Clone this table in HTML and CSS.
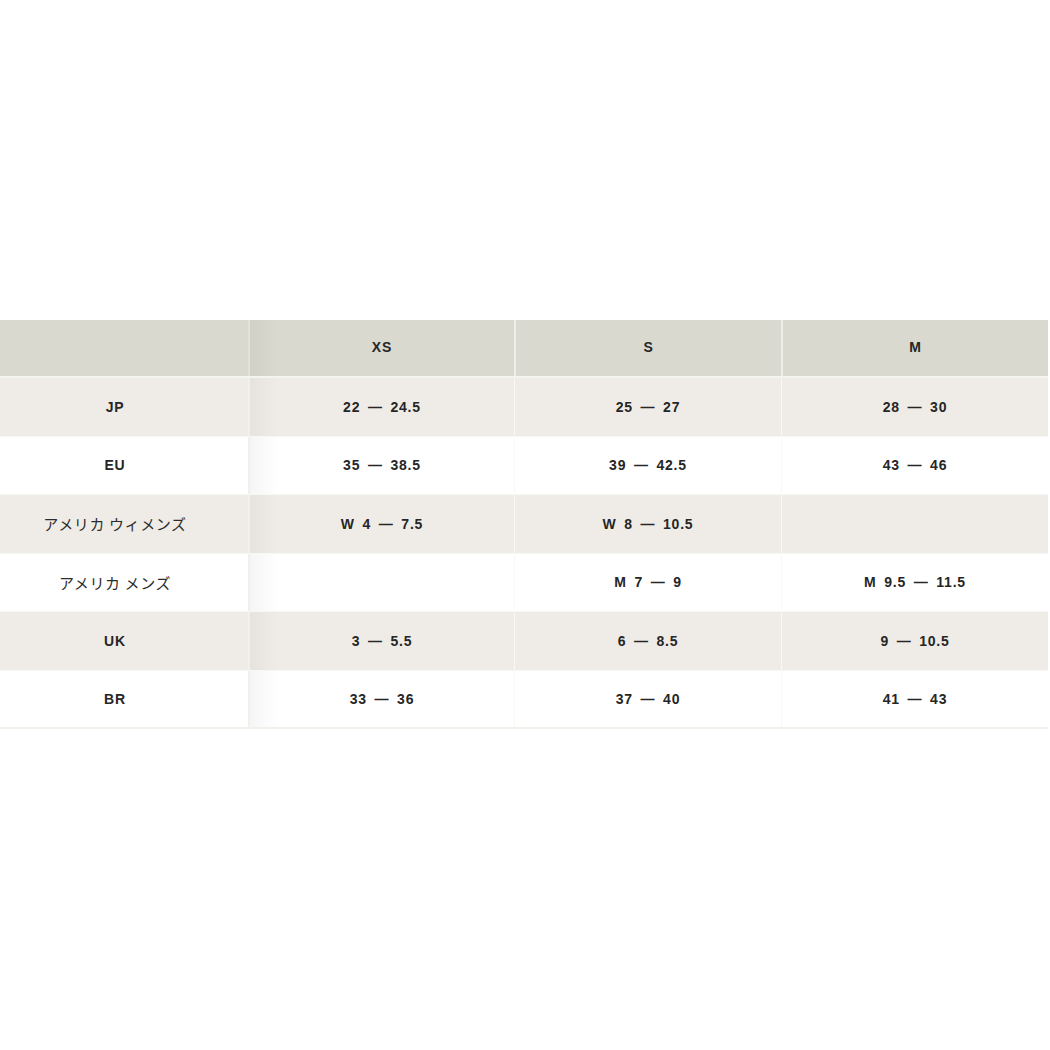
FILE: index.html
```html
<!DOCTYPE html>
<html lang="ja">
<head>
<meta charset="utf-8">
<link rel="stylesheet" href="styles.css">
</head>
<body>
<div class="page">
  <div class="size-table">
    <div class="row head">
      <div class="cell label"></div>
      <div class="cell c2">XS</div>
      <div class="cell">S</div>
      <div class="cell">M</div>
    </div>
    <div class="row tint">
      <div class="cell label">JP</div>
      <div class="cell c2">22 — 24.5</div>
      <div class="cell">25 — 27</div>
      <div class="cell">28 — 30</div>
    </div>
    <div class="row">
      <div class="cell label">EU</div>
      <div class="cell c2">35 — 38.5</div>
      <div class="cell">39 — 42.5</div>
      <div class="cell">43 — 46</div>
    </div>
    <div class="row tint">
      <div class="cell label jp">アメリカ ウィメンズ</div>
      <div class="cell c2">W 4 — 7.5</div>
      <div class="cell">W 8 — 10.5</div>
      <div class="cell"></div>
    </div>
    <div class="row">
      <div class="cell label jp">アメリカ メンズ</div>
      <div class="cell c2"></div>
      <div class="cell">M 7 — 9</div>
      <div class="cell">M 9.5 — 11.5</div>
    </div>
    <div class="row tint">
      <div class="cell label">UK</div>
      <div class="cell c2">3 — 5.5</div>
      <div class="cell">6 — 8.5</div>
      <div class="cell">9 — 10.5</div>
    </div>
    <div class="row last">
      <div class="cell label">BR</div>
      <div class="cell c2">33 — 36</div>
      <div class="cell">37 — 40</div>
      <div class="cell">41 — 43</div>
    </div>
  </div>
</div>
</body>
</html>
```

FILE: styles.css
```css
html, body {
  margin: 0;
  padding: 0;
  background: #ffffff;
}
.page {
  padding-top: 320px;
  width: 1050px;
  height: 730px;
}
.size-table {
  width: 1048px;
  display: flex;
  flex-direction: column;
  font-family: "Liberation Sans", Arial, "Noto Sans CJK JP", sans-serif;
  font-size: 14px;
  font-weight: bold;
  color: #262626;
  letter-spacing: 0.8px;
  word-spacing: 3px;
}
.row {
  display: grid;
  grid-template-columns: 248px 266px 267px 267px;
  height: 58.5px;
  border-bottom: 1px solid #f7f7f4;
  box-sizing: border-box;
  background: #ffffff;
}
.row.head {
  height: 58px;
  background: #d9d9cf;
  border-bottom: 2px solid #f4f4f0;
}
.row.tint {
  background: #efece7;
}
.row.last {
  border-bottom: 2px solid #f1f1ec;
}
.cell {
  display: flex;
  align-items: center;
  justify-content: center;
  border-left: 1px solid #f8f8f5;
}
.cell.label {
  border-left: none;
  padding-right: 18px;
}
.head .cell {
  border-left: 2px solid #eeeee8;
  padding-bottom: 2px;
}
.head .cell.label {
  border-left: none;
}
.cell.c2 {
  border-left: 2px solid #f0f0ed;
  background: linear-gradient(to right, rgba(0, 0, 0, 0.04), rgba(0, 0, 0, 0) 28px);
}
.head .cell.c2 {
  border-left: 2px solid #e2e2da;
}
.cell.jp {
  font-family: "Noto Sans CJK JP", sans-serif;
  font-weight: 400;
  font-size: 15px;
  letter-spacing: 0.6px;
  word-spacing: 0;
  color: #2c2c2c;
}
```
